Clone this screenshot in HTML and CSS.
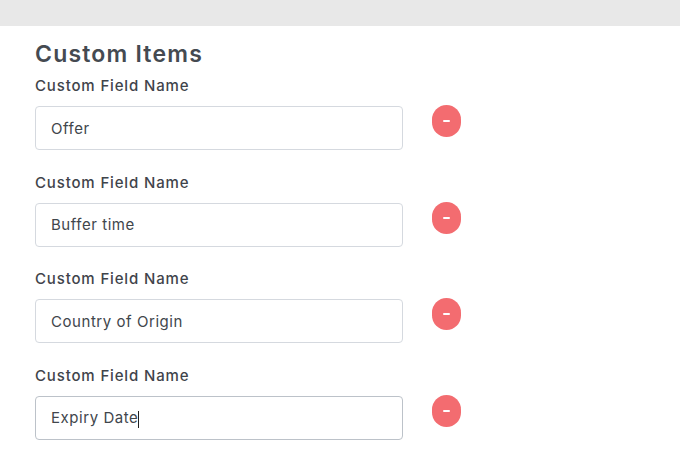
FILE: index.html
```html
<!DOCTYPE html>
<html>
<head>
<meta charset="utf-8">
<link rel="stylesheet" href="styles.css">
</head>
<body>
<div class="topbar"></div>
<main class="content">
  <h2 class="title">Custom Items</h2>
  <div class="rows">
    <div class="row">
      <div class="field">
        <label class="label">Custom Field Name</label>
        <div class="input">Offer</div>
      </div>
      <button class="remove"><span class="dash"></span></button>
    </div>
    <div class="row">
      <div class="field">
        <label class="label">Custom Field Name</label>
        <div class="input">Buffer time</div>
      </div>
      <button class="remove"><span class="dash"></span></button>
    </div>
    <div class="row">
      <div class="field">
        <label class="label">Custom Field Name</label>
        <div class="input">Country of Origin</div>
      </div>
      <button class="remove"><span class="dash"></span></button>
    </div>
    <div class="row">
      <div class="field">
        <label class="label">Custom Field Name</label>
        <div class="input focused">Expiry Date<span class="caret"></span></div>
      </div>
      <button class="remove"><span class="dash"></span></button>
    </div>
  </div>
</main>
</body>
</html>
```
FILE: styles.css
```css
* { box-sizing: border-box; }
html, body { margin: 0; padding: 0; background: #fff; }
body {
  width: 680px;
  height: 460px;
  overflow: hidden;
  font-family: "Inter", "Noto Sans", sans-serif;
  color: #41464d;
}
.topbar {
  height: 26px;
  background: #e8e8e8;
}
.content {
  padding: 14px 0 0 35px;
}
.title {
  margin: 0;
  font-size: 23px;
  font-weight: 600;
  letter-spacing: 1.2px;
  line-height: 28px;
  height: 28px;
  color: #454a51;
}
.rows {
  margin-top: 8px;
  display: flex;
  flex-direction: column;
  gap: 22.67px;
}
.row {
  display: flex;
  align-items: flex-start;
}
.field {
  display: flex;
  flex-direction: column;
  width: 368px;
}
.label {
  font-size: 15px;
  font-weight: 500;
  letter-spacing: 0.85px;
  line-height: 20px;
  height: 20px;
  margin-bottom: 10px;
  color: #3f444b;
}
.input {
  height: 44px;
  border: 1px solid #d5d9df;
  border-radius: 4px;
  padding: 0 15px;
  display: flex;
  align-items: center;
  font-size: 15px;
  letter-spacing: 0.55px;
  color: #41464c;
}
.input.focused {
  border-color: #bcc2c9;
}
.caret {
  display: inline-block;
  width: 1px;
  height: 17px;
  background: #222;
  margin: 3px 0 0 0;
}
.remove {
  margin: 29px 0 0 29px;
  width: 29px;
  height: 32px;
  border: none;
  border-radius: 15px;
  background: #f36c70;
  padding: 0;
  display: flex;
  align-items: center;
  justify-content: center;
}
.dash {
  width: 7px;
  height: 2px;
  background: #fff;
  border-radius: 1px;
}
```
